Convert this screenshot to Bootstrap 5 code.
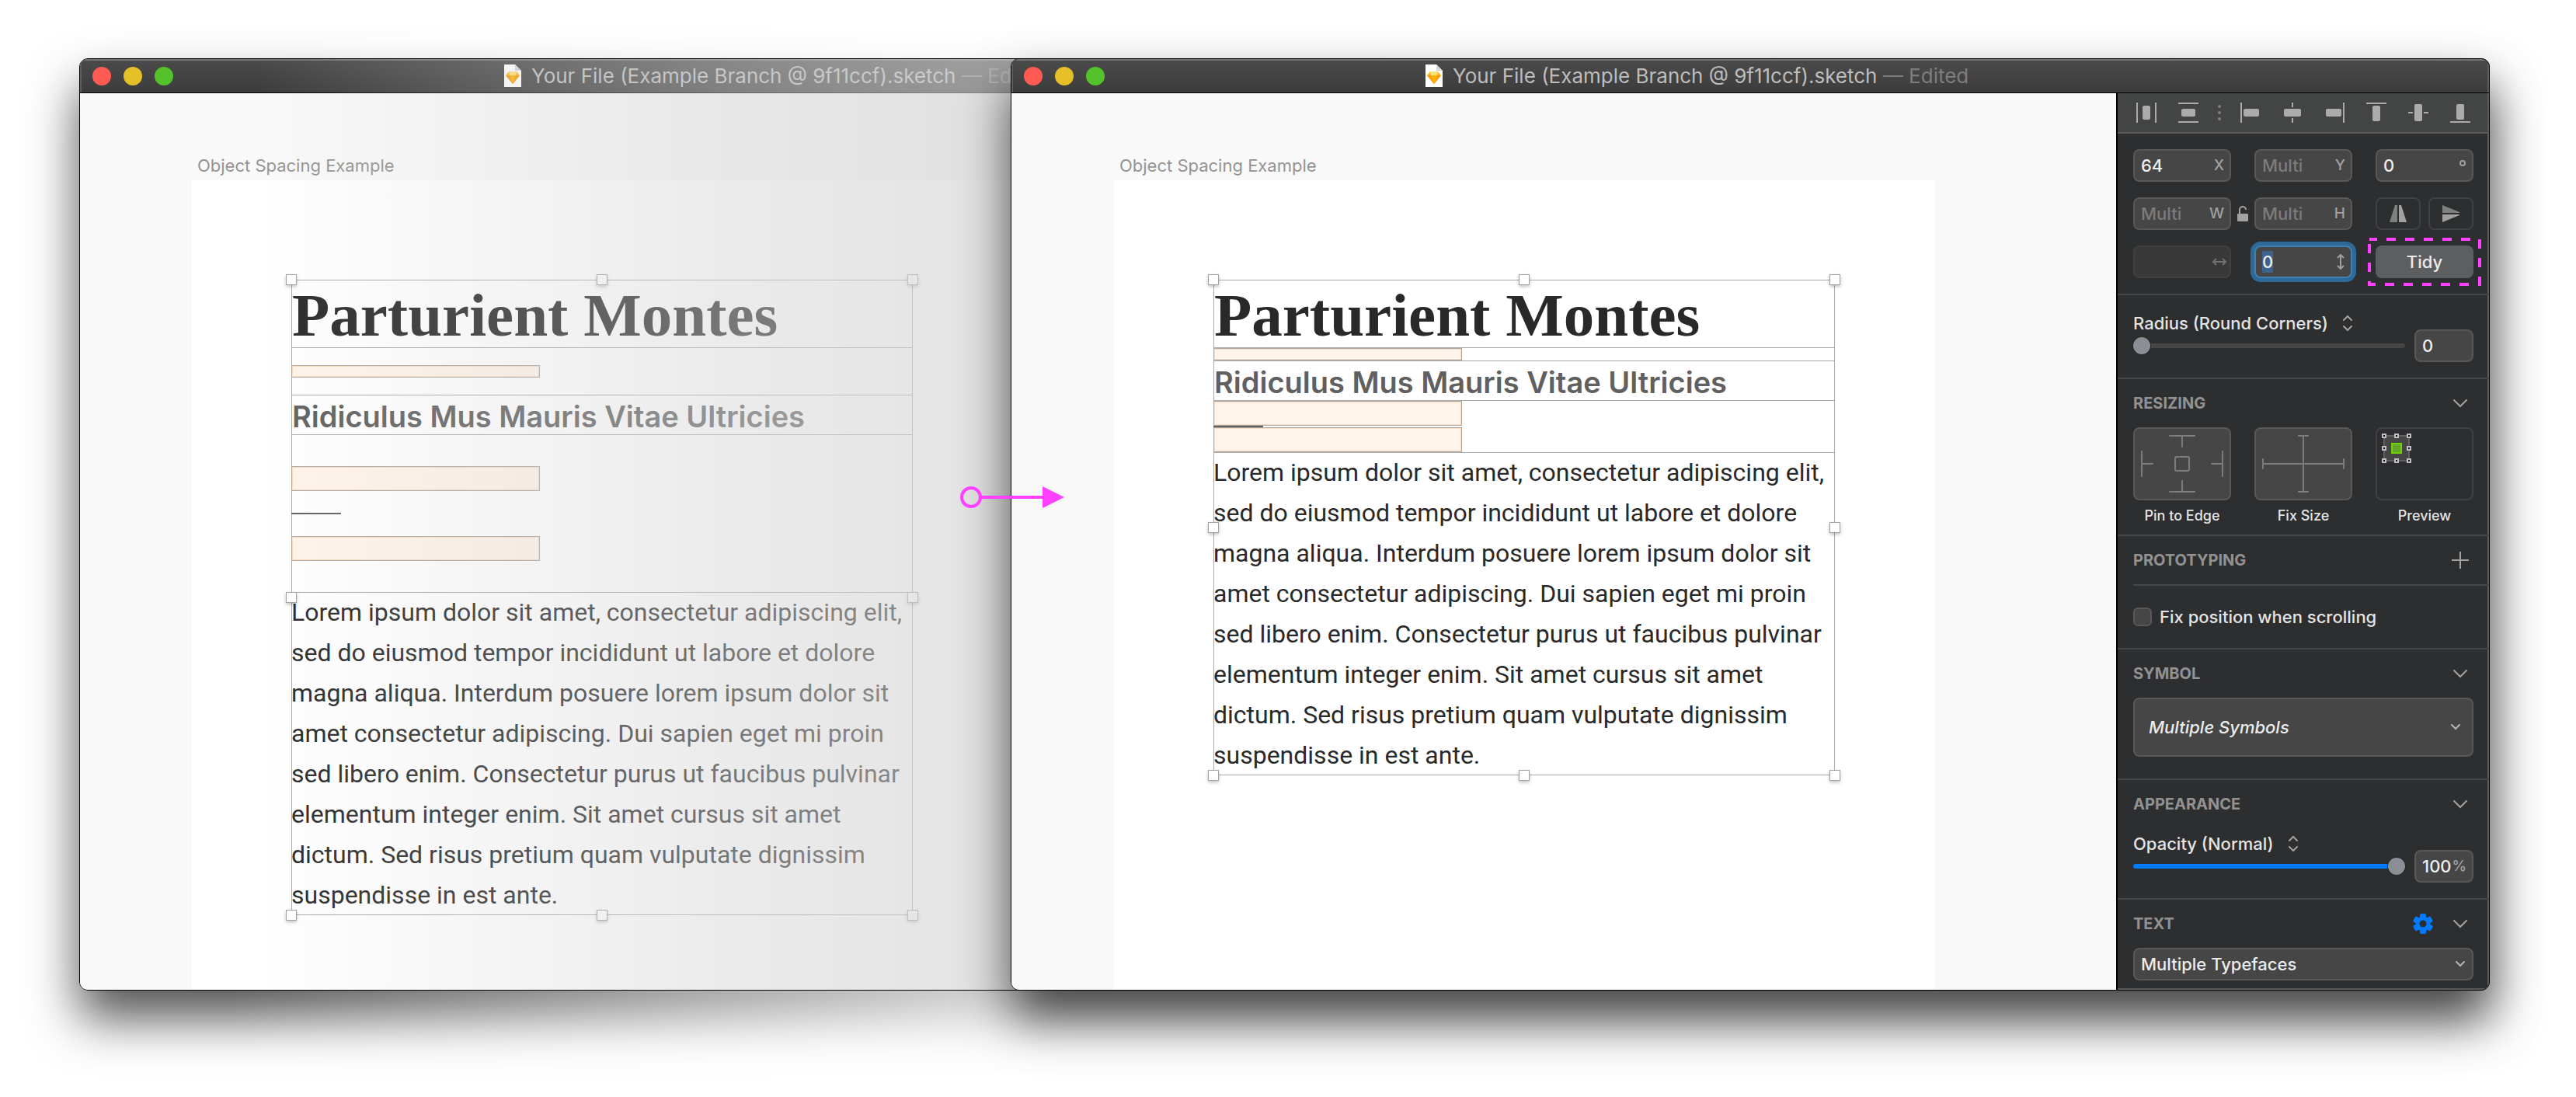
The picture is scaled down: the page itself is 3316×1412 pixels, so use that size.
<!DOCTYPE html>
<html lang="en" data-bs-theme="dark">
<head>
<meta charset="utf-8">
<meta name="viewport" content="width=device-width, initial-scale=1">
<title>Your File (Example Branch @ 9f11ccf).sketch</title>
<link rel="stylesheet" href="https://cdn.jsdelivr.net/npm/bootstrap@5.3.0/dist/css/bootstrap.min.css">
<style>
  :root { --pane: #2d2e30; --field: #464646; --edge: #585858; --rule: #454648; --magenta: #ff40ff; }
  body { background: #fff; font-family: Inter, "Liberation Sans", sans-serif; font-size: 22px; font-weight: 500; line-height: 32px; color: #e4e4e4; }
  input, select, button { font-weight: inherit; }

  /* Two overlapping document windows share one grid row */
  .desk { display: grid; grid-template-columns: 1199px minmax(0, 1fr); min-height: 100vh; padding: 75px 111px 137px 102px; position: relative; overflow: hidden; }
  .win { border: 1px solid #000; border-radius: 11px; overflow: hidden; grid-row: 1; position: relative; }
  .win-back { grid-column: 1 / 3; --title-start: 545px; --board-start: 144px; }
  .win-front { grid-column: 2 / 3; --title-start: 532px; --board-start: 132px; box-shadow: 0 36px 64px rgba(0,0,0,.68); }
  .fade-shadow { position: absolute; inset: 0; padding: inherit; -webkit-mask-image: linear-gradient(90deg, #000 300px, rgba(0,0,0,.28) 1300px); mask-image: linear-gradient(90deg, #000 300px, rgba(0,0,0,.28) 1300px); }
  .fade-shadow > div { height: 100%; border-radius: 11px; box-shadow: 0 36px 64px rgba(0,0,0,.68); }
  .veil { position: absolute; inset: -1px; background: linear-gradient(90deg, rgba(211,211,211,0) 230px, rgba(211,211,211,.46) 840px, rgba(211,211,211,.64) 1200px); }

  .titlebar { height: 44px; flex: none; padding: 0 16px; background: linear-gradient(#4b4b4b, #3c3c3c); border-bottom: 1px solid #000; box-shadow: inset 0 2px #757575, inset 2px 0 #5c5c5c, inset -2px 0 #5c5c5c; position: relative; }
  .light { width: 24px; height: 24px; padding: 0; border: 0; border-radius: 50%; }
  .light-r { background: #ff5b52; } .light-y { background: #e6c029; } .light-g { background: #53c22b; }
  .doc-title { position: absolute; left: var(--title-start); top: 0; height: 44px; gap: 12px; font-size: 26px; font-weight: 400; color: #bdbdbd; white-space: nowrap; }
  .doc-title span { color: #7e7e7e; }

  .canvas { background: #f9f9f9; padding: 78px 0 0 var(--board-start); }
  .board-name { color: #949494; font-weight: 400; padding: 0 0 4px 7px; line-height: 30px; }
  .board { width: 1056px; max-width: 100%; background: #fff; padding: 128px 128px 96px; }
  .picked { position: relative; width: 800px; color: #292929; }
  .edgebox { box-shadow: inset 0 0 0 1px #a9a9a9; }
  .ends { box-shadow: inset 1px 0 #a9a9a9, inset -1px 0 #a9a9a9; }
  .big { font: 700 79px/92px "Liberation Serif", serif; margin: 0; height: 88px; padding-left: 1px; color: #292929; }
  .sub { font: 600 38px/56px Inter, sans-serif; margin: 0; height: 52px; color: #606060; padding-left: 1px; }
  .copy { font: 400 32px/52px Roboto, sans-serif; margin: 0; white-space: nowrap; }
  .spacer { width: 320px; height: 32px; background: #fff4ea; border: 1px solid #a9a9a9; box-shadow: inset 0 0 0 1px #fcdcc0; }
  .spacer-s { height: 16px; }
  .dash { width: 64px; height: 2px; background: #606060; }
  .loose { padding-block: 22px; }
  .loose-l { padding: 40px 0; gap: 28px; }
  .knob { position: absolute; width: 14px; height: 14px; margin: -7px; background: #fff; border: 1px solid #a2a2a2; box-shadow: 0 2px 4px rgba(0,0,0,.25); }

  .inspector { width: 480px; flex: none; background: var(--pane); border-left: 2px solid #000; box-shadow: inset -2px -2px #5a5a5a; }
  .tools { height: 52px; background: #434444; border-bottom: 2px solid #5a5a5a; padding: 0 8px 0 10px; margin-right: 2px; }
  .tool { width: 54px; height: 50px; padding: 0; border: 0; background: none; color: #ababab; }
  .tool svg { width: 26px; height: 26px; display: block; margin: auto; }
  .more { width: 26px; }
  .sec { padding: 0 20px; border-bottom: 2px solid var(--rule); }
  .sec-title { font-size: 20px; font-weight: 700; line-height: 28px; color: #929292; margin: 0; }
  .sec-head { height: 62px; }
  .ico { padding: 0; border: 0; background: none; color: #a2a2a2; width: 34px; height: 28px; display: flex; align-items: center; justify-content: center; }
  .gear { color: #007aff; margin-right: 14px; }
  .metrics { display: grid; grid-template-columns: 1fr 30px 1fr 30px 1fr; row-gap: 20px; padding-block: 20px; }
  .m1 { grid-column: 1; } .m3 { grid-column: 3; } .m5 { grid-column: 5; }
  .fieldbox { position: relative; display: block; height: 42px; }
  .fieldbox input { width: 100%; height: 42px; padding: 0 8px; border: 2px solid var(--edge); border-radius: 8px; background-color: var(--field); color: #eee; outline: 0; display: block; }
  .fieldbox input::placeholder { color: #7c7c7c; opacity: 1; }
  .fieldbox .unit { position: absolute; right: 9px; top: 0; line-height: 42px; font-size: 19px; font-weight: 500; color: #a0a0a0; }
  .fieldbox .glyph { position: absolute; right: 6px; top: 11px; color: #a0a0a0; }
  .fieldbox input:disabled { background: #383938; border-color: #3f403f; }
  .fieldbox .dim { color: #707070; }
  .fieldbox input.live { border-color: #4180b0; box-shadow: 0 0 0 5px #2d6a9a; background-image: linear-gradient(#3f638f, #3f638f); background-size: 14px 28px; background-position: 8px 5px; background-repeat: no-repeat; }
  .lock { width: 30px; }
  .flips { gap: 10px; }
  .flip { height: 42px; padding: 0; border: 2px solid #404143; border-radius: 8px; background: none; color: #a0a0a0; display: flex; align-items: center; justify-content: center; }
  .tidy { height: 42px; width: 100%; padding: 0; border: 0; border-radius: 8px; background: #5d5e60; color: #ececec; font-size: 22px; display: block; }
  .callout { position: absolute; left: -10px; top: -10px; width: 146px; height: 62px; pointer-events: none; overflow: visible; }

  .slider-row { gap: 12px; padding-bottom: 20px; }
  .slider-row .fieldbox { width: 76px; margin-top: 24px; }
  .slim { appearance: none; -webkit-appearance: none; width: 100%; height: 26px; margin: 0; background: none; display: block; }
  .slim::-webkit-slider-runnable-track { height: 6px; border-radius: 3px; background: #464646; }
  .slim.full::-webkit-slider-runnable-track { background: #007aff; }
  .slim::-webkit-slider-thumb { -webkit-appearance: none; width: 22px; height: 22px; margin-top: -8px; border-radius: 50%; background: #8b8e95; box-shadow: 0 0 0 1px #27282a; }
  .blend { padding: 0; border: 0; background: none; color: inherit; gap: 18px; line-height: 32px; }
  .blend svg { color: #a2a2a2; }

  .pad { display: block; width: 126px; height: 94px; padding: 0; border: 2px solid var(--edge); border-radius: 8px; background: var(--field); color: #7c7c7c; }
  .pad svg { display: block; margin: -2px; }
  .pad-clear { background: none; border-color: #404143; }
  .pad-name { font-size: 18px; line-height: 40px; text-align: center; display: block; }
  .inner-rule { height: 2px; background: var(--rule); margin-right: -20px; }
  .tick-row { height: 80px; gap: 10px; }
  .tick { appearance: none; width: 24px; height: 24px; border: 2px solid var(--edge); border-radius: 6px; background: var(--field); margin: 0; }
  .picker { position: relative; }
  .picker select { appearance: none; width: 100%; border: 2px solid var(--edge); border-radius: 8px; background: var(--field); color: #ececec; height: 42px; padding: 0 8px; display: block; }
  .picker svg { position: absolute; right: 11px; top: 50%; margin-top: -4px; color: #b4b4b4; pointer-events: none; }
  .picker-tall select { height: 76px; padding: 0 18px; font-style: italic; }
  .picker-tall svg { right: 17px; }
  .link-arrow { position: absolute; left: 1236px; top: 626px; z-index: 3; }
</style>
</head>
<body>
<svg width="0" height="0" class="position-absolute" aria-hidden="true">
  <defs>
    <linearGradient id="gem" x1="0" y1="0" x2="0" y2="1"><stop offset="0" stop-color="#fdc22f"/><stop offset=".45" stop-color="#fdb11b"/><stop offset="1" stop-color="#f38b00"/></linearGradient>
    <symbol id="doc" viewBox="0 0 24 30">
      <path d="M1 0H15L23 8V29H1Z" fill="#fff"/><path d="M15 0L23 8H15Z" fill="#d6d6d6"/>
      <path d="M7 9h10l4 5-9 11L3 14Z" fill="url(#gem)"/><path d="M7 9h10l-1 5H8Z" fill="#ffe07a"/><path d="M3 14h18l-9 11Z" fill="#fb9a05"/><path d="M8 14h8l-4 11Z" fill="#ffb300"/>
    </symbol>
    <symbol id="down" viewBox="0 0 20 12"><path d="M2 2l8 8 8-8" fill="none" stroke="currentColor" stroke-width="2" stroke-linecap="round"/></symbol>
    <symbol id="down-s" viewBox="0 0 12 8"><path d="M1 1l5 5 5-5" fill="none" stroke="currentColor" stroke-width="2" stroke-linecap="round"/></symbol>
    <symbol id="updown" viewBox="0 0 14 22"><path d="M2 7l5-5 5 5M2 15l5 5 5-5" fill="none" stroke="currentColor" stroke-width="2" stroke-linecap="round"/></symbol>
  </defs>
</svg>

<main class="desk">
  <div class="fade-shadow" aria-hidden="true"><div></div></div>

  <section class="win win-back d-flex flex-column" aria-label="Before">
    <header class="titlebar d-flex align-items-center gap-3">
      <button class="light light-r" aria-label="Close"></button><button class="light light-y" aria-label="Minimise"></button><button class="light light-g" aria-label="Zoom"></button>
      <div class="doc-title d-flex align-items-center"><svg width="24" height="30"><use href="#doc"/></svg><div>Your File (Example Branch @ 9f11ccf).sketch <span>— Edited</span></div></div>
    </header>
    <div class="canvas flex-grow-1 d-flex flex-column">
      <div class="board-name">Object Spacing Example</div>
      <article class="board flex-grow-1">
        <div class="picked">
          <h1 class="big edgebox">Parturient Montes</h1>
          <div class="ends loose"><div class="spacer spacer-s"></div></div>
          <h2 class="sub edgebox">Ridiculus Mus Mauris Vitae Ultricies</h2>
          <div class="ends loose-l d-flex flex-column"><div class="spacer"></div><div class="dash"></div><div class="spacer"></div></div>
          <p class="copy edgebox">Lorem ipsum dolor sit amet, consectetur adipiscing elit,<br>sed do eiusmod tempor incididunt ut labore et dolore<br>magna aliqua. Interdum posuere lorem ipsum dolor sit<br>amet consectetur adipiscing. Dui sapien eget mi proin<br>sed libero enim. Consectetur purus ut faucibus pulvinar<br>elementum integer enim. Sit amet cursus sit amet<br>dictum. Sed risus pretium quam vulputate dignissim<br>suspendisse in est ante.</p>
          <i class="knob top-0 start-0"></i><i class="knob top-0 start-50"></i><i class="knob top-0 start-100"></i>
          <i class="knob top-50 start-0"></i><i class="knob top-50 start-100"></i>
          <i class="knob top-100 start-0"></i><i class="knob top-100 start-50"></i><i class="knob top-100 start-100"></i>
        </div>
      </article>
    </div>
    <div class="veil"></div>
  </section>

  <section class="win win-front d-flex flex-column" aria-label="After">
    <header class="titlebar d-flex align-items-center gap-3">
      <button class="light light-r" aria-label="Close"></button><button class="light light-y" aria-label="Minimise"></button><button class="light light-g" aria-label="Zoom"></button>
      <div class="doc-title d-flex align-items-center"><svg width="24" height="30"><use href="#doc"/></svg><div>Your File (Example Branch @ 9f11ccf).sketch <span>— Edited</span></div></div>
    </header>
    <div class="d-flex flex-grow-1">
      <div class="canvas flex-grow-1 d-flex flex-column">
        <div class="board-name">Object Spacing Example</div>
        <article class="board flex-grow-1">
          <div class="picked">
            <h1 class="big edgebox">Parturient Montes</h1>
            <div class="ends"><div class="spacer spacer-s"></div></div>
            <h2 class="sub edgebox">Ridiculus Mus Mauris Vitae Ultricies</h2>
            <div class="ends"><div class="spacer"></div><div class="dash"></div><div class="spacer"></div></div>
            <p class="copy edgebox">Lorem ipsum dolor sit amet, consectetur adipiscing elit,<br>sed do eiusmod tempor incididunt ut labore et dolore<br>magna aliqua. Interdum posuere lorem ipsum dolor sit<br>amet consectetur adipiscing. Dui sapien eget mi proin<br>sed libero enim. Consectetur purus ut faucibus pulvinar<br>elementum integer enim. Sit amet cursus sit amet<br>dictum. Sed risus pretium quam vulputate dignissim<br>suspendisse in est ante.</p>
            <i class="knob top-0 start-0"></i><i class="knob top-0 start-50"></i><i class="knob top-0 start-100"></i>
            <i class="knob top-50 start-0"></i><i class="knob top-50 start-100"></i>
            <i class="knob top-100 start-0"></i><i class="knob top-100 start-50"></i><i class="knob top-100 start-100"></i>
          </div>
        </article>
      </div>

      <aside class="inspector" aria-label="Inspector">
        <div class="tools d-flex" role="toolbar" aria-label="Alignment">
          <button class="tool" aria-label="Distribute horizontally"><svg viewBox="0 0 26 26" fill="currentColor"><path d="M0 0h2v26H0zM24 0h2v26h-2z"/><rect x="8" y="4" width="10" height="18" rx="2"/></svg></button>
          <button class="tool" aria-label="Distribute vertically"><svg viewBox="0 0 26 26" fill="currentColor"><path d="M0 0h26v2H0zM0 24h26v2H0z"/><rect x="4" y="8" width="18" height="10" rx="2"/></svg></button>
          <div class="more d-flex align-items-center justify-content-center"><svg width="4" height="20" fill="#808080"><circle cx="2" cy="2" r="2"/><circle cx="2" cy="10" r="2"/><circle cx="2" cy="18" r="2"/></svg></div>
          <button class="tool" aria-label="Align left"><svg viewBox="0 0 26 26" fill="currentColor"><path d="M0 0h2v26H0z"/><rect x="4" y="8" width="20" height="10" rx="2"/></svg></button>
          <button class="tool" aria-label="Align centre"><svg viewBox="0 0 26 26" fill="currentColor"><path d="M12 0h2v6h-2zM12 20h2v6h-2z"/><rect x="2" y="8" width="22" height="10" rx="2"/></svg></button>
          <button class="tool" aria-label="Align right"><svg viewBox="0 0 26 26" fill="currentColor"><path d="M24 0h2v26h-2z"/><rect x="2" y="8" width="20" height="10" rx="2"/></svg></button>
          <button class="tool" aria-label="Align top"><svg viewBox="0 0 26 26" fill="currentColor"><path d="M0 0h26v2H0z"/><rect x="8" y="4" width="10" height="20" rx="2"/></svg></button>
          <button class="tool" aria-label="Align middle"><svg viewBox="0 0 26 26" fill="currentColor"><path d="M0 12h6v2H0zM20 12h6v2h-6z"/><rect x="8" y="2" width="10" height="22" rx="2"/></svg></button>
          <button class="tool" aria-label="Align bottom"><svg viewBox="0 0 26 26" fill="currentColor"><path d="M0 24h26v2H0z"/><rect x="8" y="2" width="10" height="20" rx="2"/></svg></button>
        </div>

        <div class="sec metrics">
          <label class="fieldbox m1"><input type="text" value="64" aria-label="X"><span class="unit">X</span></label>
          <label class="fieldbox m3"><input type="text" placeholder="Multi" aria-label="Y"><span class="unit">Y</span></label>
          <label class="fieldbox m5"><input type="text" value="0" aria-label="Rotation"><svg class="glyph" width="12" height="12"><circle cx="4" cy="7" r="3" fill="none" stroke="currentColor" stroke-width="2"/></svg></label>
          <label class="fieldbox m1"><input type="text" placeholder="Multi" aria-label="Width"><span class="unit">W</span></label>
          <button class="ico lock align-self-center" aria-label="Lock proportions"><svg width="14" height="22" viewBox="0 0 14 22"><path d="M3 12V6a4 4 0 0 1 8 0" fill="none" stroke="currentColor" stroke-width="2"/><rect y="11" width="14" height="10" rx="1" fill="currentColor"/></svg></button>
          <label class="fieldbox m3"><input type="text" placeholder="Multi" aria-label="Height"><span class="unit">H</span></label>
          <div class="m5 d-flex flips">
            <button class="flip flex-fill" aria-label="Flip horizontally"><svg width="22" height="22" viewBox="0 0 22 22"><path d="M10 0v22H0L7 0z" fill="#7f8080"/><path d="M12 0v22h10L15 0z" fill="currentColor"/></svg></button>
            <button class="flip flex-fill" aria-label="Flip vertically"><svg width="22" height="22" viewBox="0 0 22 22"><path d="M0 10h22v-1L0 0z" fill="#7f8080"/><path d="M0 12h22v1L0 22z" fill="currentColor"/></svg></button>
          </div>
          <label class="fieldbox m1"><input type="text" disabled aria-label="Horizontal spacing"><svg class="glyph dim" width="18" height="20" viewBox="0 0 18 20"><path d="M1 10h16M5 6l-4 4 4 4M13 6l4 4-4 4" fill="none" stroke="currentColor" stroke-width="2"/></svg></label>
          <label class="fieldbox m3"><input class="live" type="text" value="0" aria-label="Vertical spacing"><svg class="glyph" width="18" height="20" viewBox="0 0 18 20"><path d="M9 2v16M5 5l4-4 4 4M5 15l4 4 4-4" fill="none" stroke="currentColor" stroke-width="2"/></svg></label>
          <div class="m5 position-relative"><button class="tidy">Tidy</button><svg class="callout" viewBox="0 0 146 62"><rect x="2" y="2" width="142" height="58" fill="none" stroke="#ff40ff" stroke-width="4" stroke-dasharray="12 12" stroke-dashoffset="2"/></svg></div>
        </div>

        <div class="sec">
          <div class="slider-row d-flex" style="padding-top:20px">
            <div class="flex-grow-1">
              <button class="blend d-flex align-items-center">Radius (Round Corners) <svg width="14" height="22"><use href="#updown"/></svg></button>
              <input class="slim" type="range" min="0" max="100" value="0" aria-label="Radius">
            </div>
            <label class="fieldbox"><input type="text" value="0" aria-label="Radius value"></label>
          </div>
        </div>

        <div class="sec">
          <div class="sec-head d-flex align-items-center justify-content-between"><h3 class="sec-title">RESIZING</h3><button class="ico" aria-label="Collapse"><svg width="20" height="12"><use href="#down"/></svg></button></div>
          <div class="d-flex justify-content-between pb-1">
            <div><button class="pad" aria-labelledby="p1"><svg width="126" height="94" fill="none" stroke="currentColor" stroke-width="2" stroke-linecap="round"><path d="M47 11h32M63 11v14M47 83h32M63 83V69M11 31v32M11 47h14M115 31v32M115 47h-14"/><rect x="54" y="38" width="18" height="18" rx="2"/></svg></button><span class="pad-name" id="p1">Pin to Edge</span></div>
            <div><button class="pad" aria-labelledby="p2"><svg width="126" height="94" fill="none" stroke="currentColor" stroke-width="2" stroke-linecap="round"><path d="M57 11h12M57 83h12M63 11v72M11 41v12M115 41v12M11 47h104"/></svg></button><span class="pad-name" id="p2">Fix Size</span></div>
            <div><div class="pad pad-clear"><svg width="126" height="94"><rect x="11" y="11" width="32" height="32" fill="#464646" stroke="#606060" stroke-width="2"/><rect x="21" y="21" width="12" height="12" fill="#62a52c" stroke="#6fd400" stroke-width="2"/><g fill="#111" stroke="#c0c0c4" stroke-width="2"><path d="M9 9h4v4H9zM25 9h4v4h-4zM41 9h4v4h-4zM9 25h4v4H9zM41 25h4v4h-4zM9 41h4v4H9zM25 41h4v4h-4zM41 41h4v4h-4z"/></g></svg></div><span class="pad-name">Preview</span></div>
          </div>
        </div>

        <div class="sec">
          <div class="sec-head d-flex align-items-center justify-content-between"><h3 class="sec-title">PROTOTYPING</h3><button class="ico" aria-label="Add"><svg width="22" height="22"><path d="M11 0v22M0 11h22" stroke="currentColor" stroke-width="2"/></svg></button></div>
          <div class="inner-rule"></div>
          <div class="d-flex align-items-center tick-row"><input class="tick" type="checkbox" id="fix"><label for="fix">Fix position when scrolling</label></div>
        </div>

        <div class="sec" style="padding-bottom:28px">
          <div class="sec-head d-flex align-items-center justify-content-between"><h3 class="sec-title">SYMBOL</h3><button class="ico" aria-label="Collapse"><svg width="20" height="12"><use href="#down"/></svg></button></div>
          <div class="picker picker-tall"><select aria-label="Symbol"><option>Multiple Symbols</option></select><svg width="12" height="8"><use href="#down-s"/></svg></div>
        </div>

        <div class="sec">
          <div class="sec-head d-flex align-items-center justify-content-between"><h3 class="sec-title">APPEARANCE</h3><button class="ico" aria-label="Collapse"><svg width="20" height="12"><use href="#down"/></svg></button></div>
          <div class="slider-row d-flex pt-1">
            <div class="flex-grow-1">
              <button class="blend d-flex align-items-center">Opacity (Normal) <svg width="14" height="22"><use href="#updown"/></svg></button>
              <input class="slim full" type="range" min="0" max="100" value="100" aria-label="Opacity">
            </div>
            <label class="fieldbox"><input type="text" value="100" aria-label="Opacity value"><span class="unit">%</span></label>
          </div>
        </div>

        <div class="px-3 mx-1" style="padding-bottom:12px">
          <div class="sec-head d-flex align-items-center"><h3 class="sec-title me-auto">TEXT</h3>
            <button class="ico gear" aria-label="Text options"><svg width="26" height="26" viewBox="-13 -13 26 26"><circle r="7" fill="none" stroke="currentColor" stroke-width="5"/><g fill="currentColor"><rect id="cog" x="-4" y="-13" width="8" height="6" rx="2"/><use href="#cog" transform="rotate(60)"/><use href="#cog" transform="rotate(120)"/><use href="#cog" transform="rotate(180)"/><use href="#cog" transform="rotate(240)"/><use href="#cog" transform="rotate(300)"/></g></svg></button>
            <button class="ico" aria-label="Collapse"><svg width="20" height="12"><use href="#down"/></svg></button></div>
          <div class="picker"><select aria-label="Typeface"><option>Multiple Typefaces</option></select><svg width="12" height="8"><use href="#down-s"/></svg></div>
        </div>
      </aside>
    </div>
  </section>

  <svg class="link-arrow" width="134" height="28" aria-hidden="true"><circle cx="14" cy="14" r="12" fill="none" stroke="#ff40ff" stroke-width="4"/><path d="M27 12h80v4H27zM106 0l28 14-28 14z" fill="#ff40ff"/></svg>
</main>
<script src="https://cdn.jsdelivr.net/npm/bootstrap@5.3.0/dist/js/bootstrap.bundle.min.js"></script>
</body>
</html>
